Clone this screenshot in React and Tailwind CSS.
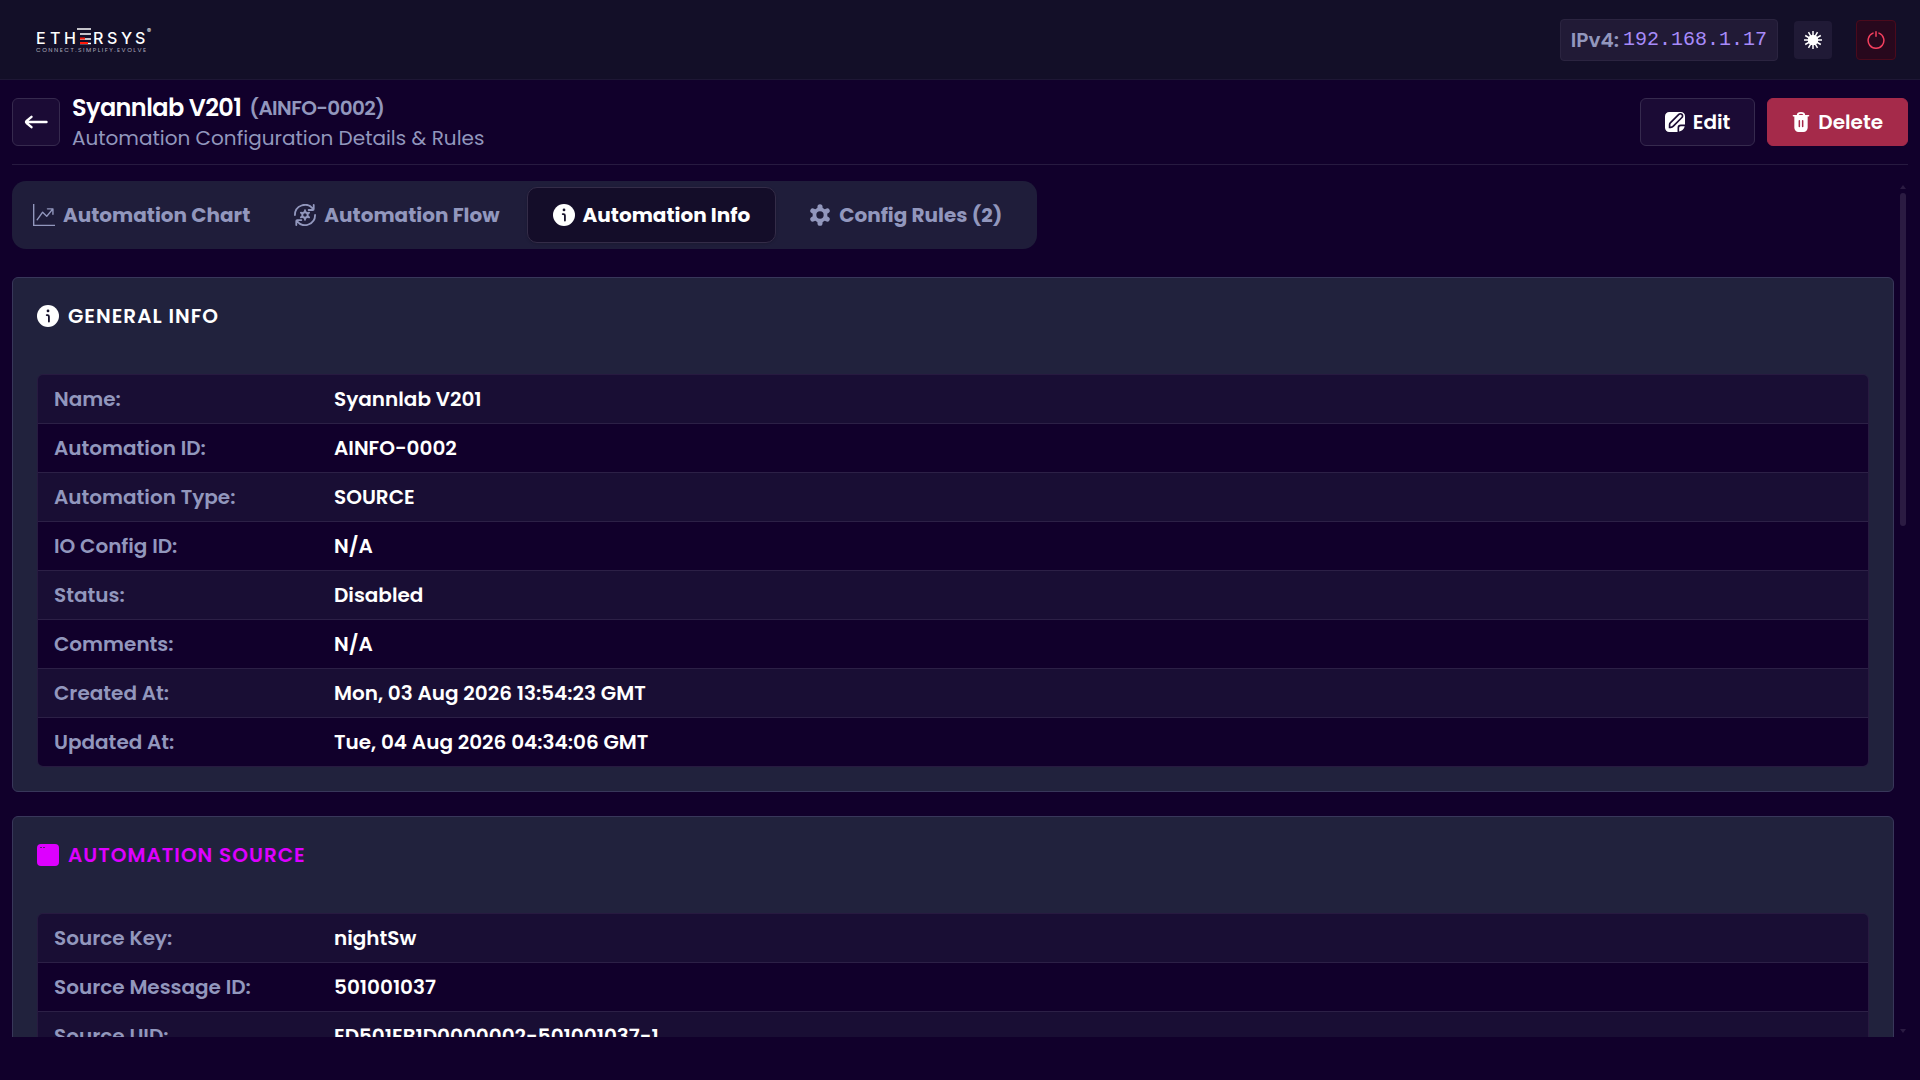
// src/pages/AutomationDetails.jsx
import React, { useState } from "react";
import { BsGraphUpArrow } from "react-icons/bs";

const generalInfo = [
  { label: "Name:", value: "Syannlab V201" },
  { label: "Automation ID:", value: "AINFO-0002" },
  { label: "Automation Type:", value: "SOURCE" },
  { label: "IO Config ID:", value: "N/A" },
  { label: "Status:", value: "Disabled" },
  { label: "Comments:", value: "N/A" },
  { label: "Created At:", value: "Mon, 03 Aug 2026 13:54:23 GMT" },
  { label: "Updated At:", value: "Tue, 04 Aug 2026 04:34:06 GMT" },
];

const sourceInfo = [
  { label: "Source Key:", value: "nightSw" },
  { label: "Source Message ID:", value: "501001037" },
  { label: "Source UID:", value: "ED501EB1D0000002-501001037-1" },
];

const Logo = () => (
  <svg width="118" height="28" viewBox="0 0 118 28" role="img" aria-label="Ethersys">
    <g fill="#ffffff" fontFamily="Inter, sans-serif" fontSize="16" fontWeight="500">
      <text x="0 14 28" y="18">
        ETH
      </text>
      <text x="57 71 85 99" y="18">
        RSYS
      </text>
    </g>
    <path d="M41 3H55M44 8H55M44 13H55M44 17.5H55" stroke="#ffffff" strokeWidth="1.5" />
    <path d="M44 12.500H49M44 17H52" stroke="#ff1a0a" strokeWidth="2" />
    <text x="111" y="7" fontFamily="Inter, sans-serif" fontSize="6" fill="#ffffff">
      ®
    </text>
    <text
      x="0"
      y="26"
      fontFamily="Poppins, sans-serif"
      fontSize="6"
      letterSpacing="1.5"
      fill="#a9a7b8"
    >
      CONNECT.SIMPLIFY.EVOLVE
    </text>
  </svg>
);

const BackIcon = () => (
  <svg width="24" height="24" viewBox="0 0 24 24" fill="none" stroke="currentColor" strokeWidth="2.4" strokeLinecap="round">
    <path d="M2 12H22.5M7.5 6.8L2.6 10.9a1.5 1.5 0 0 0 0 2.2L7.5 17.2" />
  </svg>
);

const InfoIcon = () => (
  <svg width="22" height="22" viewBox="0 0 24 24" aria-hidden="true">
    <circle cx="12" cy="12" r="12" fill="currentColor" />
    <circle cx="12" cy="6.5" r="1.5" className="fill-[#17132d]" />
    <path d="M10.6 11h.9a1.5 1.5 0 0 1 1.5 1.5V18" fill="none" className="stroke-[#17132d]" strokeWidth="2" strokeLinecap="round" />
  </svg>
);

const FlowIcon = () => (
  <svg width="22" height="22" viewBox="0 0 24 24" fill="none" stroke="currentColor" strokeWidth="2" strokeLinecap="round" strokeLinejoin="round">
    <path d="M1 12A11 11 0 0 1 20.5 5M21.5 1v4.5a1 1 0 0 1-1 1H16" />
    <path d="M23 12A11 11 0 0 1 3.5 19M2.5 23v-4.500a1 1 0 0 1 1-1H8" />
    <circle cx="12" cy="12" r="3" />
    <path d="M12 6.800V9M12 15v2.200M7.500 9.400l1.900 1.100M14.600 13.500l1.900 1.100M7.500 14.600l1.900-1.100M14.600 10.500l1.900-1.100" />
  </svg>
);

const GearIcon = () => (
  <svg width="22" height="22" viewBox="0 0 24 24">
    <g stroke="currentColor" strokeWidth="5.6" strokeLinecap="round">
      <path d="M12 3V7M12 17V21M4.200 7.500l3.500 2M16.300 14.500l3.500 2M4.200 16.500l3.500-2M16.300 9.500l3.500-2" />
    </g>
    <circle cx="12" cy="12" r="6" fill="none" stroke="currentColor" strokeWidth="4.200" />
    <circle cx="12" cy="12" r="4" className="fill-[#1f1d3a]" />
  </svg>
);

const EditIcon = () => (
  <svg width="20" height="20" viewBox="0 0 24 24">
    <path d="M5 0h14a5 5 0 0 1 5 5v10h-5a4 4 0 0 0-4 4v5H5a5 5 0 0 1-5-5V5a5 5 0 0 1 5-5Z" fill="currentColor" />
    <path d="M17 23.500V19a2 2 0 0 1 2-2h4.600a7 7 0 0 1-2 4l-1 1a7 7 0 0 1-3.600 1.500Z" fill="currentColor" />
    <path
      d="M5.500 18.500v-3.300a3 3 0 0 1 .9-2.100L16.600 2.900a2.600 2.600 0 0 1 3.700 0 2.600 2.600 0 0 1 0 3.700L10 16.900a5 5 0 0 1-3.200 1.600Z"
      fill="currentColor"
      className="stroke-[#1b0b35]"
      strokeWidth="2"
    />
  </svg>
);

const TrashIcon = () => (
  <svg width="18" height="20" viewBox="0 0 20 24">
    <path d="M6 4a4 3 0 0 1 8 0" fill="none" stroke="currentColor" strokeWidth="2" />
    <path d="M1 3.500h18a1 1 0 0 1 0 2H18V19a5 5 0 0 1-5 5H7a5 5 0 0 1-5-5V5.500H1a1 1 0 0 1 0-2Z" fill="currentColor" />
    <path d="M8 10.500v7M12 10.500v7" className="stroke-[#a52a4a]" strokeWidth="1.800" strokeLinecap="round" />
  </svg>
);

const SunIcon = () => (
  <svg width="18" height="18" viewBox="0 0 24 24" fill="currentColor" stroke="currentColor" strokeWidth="2">
    <circle cx="12" cy="12" r="7" stroke="none" />
    <path d="M12 0V24M0 12H24M6 1.600L18 22.400M1.600 6L22.400 18M1.600 18L22.400 6M6 22.400L18 1.600" />
  </svg>
);

const PowerIcon = () => (
  <svg width="18" height="18" viewBox="0 0 24 24" fill="none" stroke="currentColor" strokeWidth="2" strokeLinecap="round">
    <path d="M12 1V7M8 2.800a10.500 10.500 0 1 0 8 0" />
  </svg>
);

const SourceIcon = () => (
  <svg width="22" height="22" viewBox="0 0 22 22" aria-hidden="true">
    <rect width="22" height="22" rx="4" fill="currentColor" />
    <path d="M3 3.500h2M6 3.500h2" stroke="#5b1a78" strokeWidth="1" />
  </svg>
);

const tabs = [
  { id: "chart", label: "Automation Chart", icon: <BsGraphUpArrow size={22} />, spacing: "px-3.5" },
  { id: "flow", label: "Automation Flow", icon: <FlowIcon />, spacing: "pl-7 pr-3.5" },
  { id: "info", label: "Automation Info", icon: <InfoIcon />, spacing: "ml-3 px-[25px]" },
  { id: "rules", label: "Config Rules (2)", icon: <GearIcon />, spacing: "pl-8 pr-7" },
];

const DetailCard = ({ title, icon, titleClass, rows }) => (
  <section className="rounded-md border border-[#38375a] bg-[#21223d] p-6">
    <h2 className={`mb-11 flex items-center gap-[9px] text-[20px] leading-7 font-semibold tracking-wider ${titleClass}`}>
      {icon}
      {title}
    </h2>
    <div className="overflow-hidden rounded-md border border-[#271a40]">
      <table className="w-full border-collapse text-left text-[20px] leading-[30px]">
        <tbody>
          {rows.map((row) => (
            <tr
              key={row.label}
              className="border-b border-[#2c2046] odd:bg-[#190e34] even:bg-[#11002b] last:border-b-0"
            >
              <th scope="row" className="w-[280px] px-4 py-[9px] font-semibold text-[#9297bd]">
                {row.label}
              </th>
              <td className="px-4 py-[9px] font-semibold text-white">{row.value}</td>
            </tr>
          ))}
        </tbody>
      </table>
    </div>
  </section>
);

// Slim scroll track with small arrows at both ends
const ScrollTrack = () => (
  <div className="flex w-3.5 shrink-0 flex-col items-center py-1 pl-1 text-[#2b1b42]" aria-hidden="true">
    <svg width="6" height="4" viewBox="0 0 6 4" fill="currentColor">
      <path d="M0 4L3 0L6 4Z" />
    </svg>
    <div className="my-1 min-h-0 flex-1">
      <div className="h-[40%] w-1.5 rounded-full bg-[#2b1b42]" />
    </div>
    <svg width="6" height="4" viewBox="0 0 6 4" fill="currentColor">
      <path d="M0 0L3 4L6 0Z" />
    </svg>
  </div>
);

const App = () => {
  const [activeTab, setActiveTab] = useState("info");

  return (
    <div className="flex h-screen flex-col bg-[#11002b] font-[Poppins,Inter,sans-serif] text-[20px] text-white">
      <header className="flex h-20 shrink-0 items-center justify-between border-b border-[#1e1735] bg-[#130f28] pr-6 pl-9">
        <a href="#home">
          <Logo />
        </a>
        <div className="flex items-center">
          <div className="flex h-[42px] items-center gap-1 rounded border border-[#2b2440] bg-[#211a36] px-2.5">
            <span className="font-semibold text-[#9297bd]">IPv4:</span>
            <span className="font-['Liberation_Mono',monospace] text-[#a78bfa]">192.168.1.17</span>
          </div>
          <button aria-label="Toggle theme" className="ml-4 flex size-[38px] items-center justify-center rounded bg-[#201a36]">
            <SunIcon />
          </button>
          <button
            aria-label="Log out"
            className="ml-6 flex size-10 items-center justify-center rounded border border-[#4b0a1c] bg-[#28081d] text-[#f43f5e]"
          >
            <PowerIcon />
          </button>
        </div>
      </header>

      <main className="flex min-h-0 flex-1 flex-col px-3 pb-[43px]">
        <div className="flex shrink-0 items-center justify-between border-b border-[#271a40] py-[11px]">
          <div className="flex items-center gap-3">
            <button
              aria-label="Go back"
              className="flex size-12 items-center justify-center rounded-md border border-[#362a4e] bg-[#1b0b35]"
            >
              <BackIcon />
            </button>
            <div className="pt-0.5 leading-[30px]">
              <h1 className="flex items-center gap-2 text-2xl leading-[30px] font-semibold tracking-tight">
                Syannlab V201
                <span className="text-[20px] text-[#9297bd]">(AINFO-0002)</span>
              </h1>
              <p className="text-[#9297bd]">Automation Configuration Details &amp; Rules</p>
            </div>
          </div>
          <div className="flex gap-3 font-semibold">
            <button className="flex h-12 items-center gap-2 rounded-md border border-[#362a4e] bg-[#1b0b35] px-6">
              <EditIcon />
              Edit
            </button>
            <button className="flex h-12 items-center gap-2 rounded-md border border-[#a52a4a] bg-[#a52a4a] px-6">
              <TrashIcon />
              Delete
            </button>
          </div>
        </div>

        <div className="mt-4 flex min-h-0 flex-1">
          <div className="min-w-0 flex-1 overflow-y-auto [scrollbar-width:none]">
            <div role="tablist" className="inline-flex rounded-[14px] bg-[#1f1d3a] p-1.5 align-top">
              {tabs.map((tab) => (
                <button
                  key={tab.id}
                  role="tab"
                  aria-selected={activeTab === tab.id}
                  onClick={() => setActiveTab(tab.id)}
                  className={`flex h-14 items-center gap-2 rounded-[10px] border font-bold ${tab.spacing} ${
                    activeTab === tab.id
                      ? "border-[#342c48] bg-[#140d29] text-white shadow-sm"
                      : "border-transparent text-[#9297bd]"
                  }`}
                >
                  {tab.icon}
                  {tab.label}
                </button>
              ))}
            </div>

            <div className="mt-7 flex flex-col gap-6 pb-6">
              <DetailCard title="GENERAL INFO" icon={<InfoIcon />} titleClass="text-white" rows={generalInfo} />
              <DetailCard
                title="AUTOMATION SOURCE"
                icon={<SourceIcon />}
                titleClass="text-[#dd00ff]"
                rows={sourceInfo}
              />
            </div>
          </div>
          <ScrollTrack />
        </div>
      </main>
    </div>
  );
};

export default App;
